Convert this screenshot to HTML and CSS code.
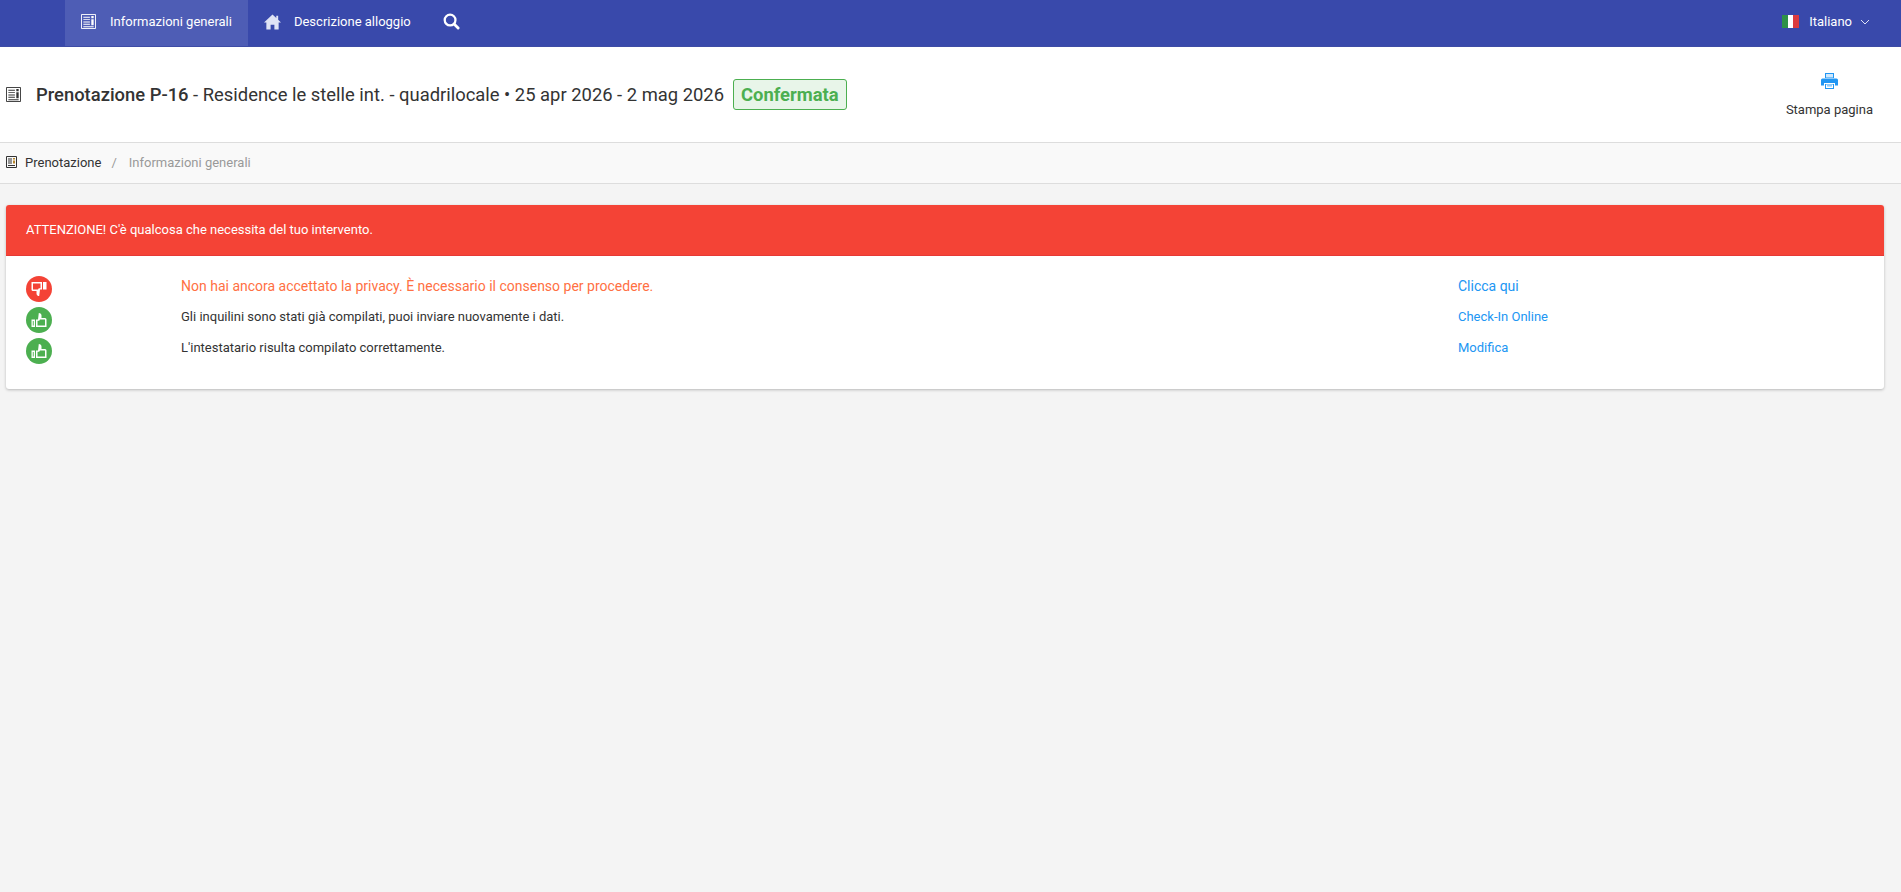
FILE: index.html
```html
<!DOCTYPE html>
<html lang="it">
<head>
  <meta charset="UTF-8">
  <meta name="viewport" content="width=device-width, initial-scale=1.0">
  <title>Prenotazione P-16</title>
  <link rel="stylesheet" href="styles.css">
</head>
<body>
  <!-- Barra di navigazione -->
  <nav class="topbar">
    <div class="topbar-menu">
      <a class="topbar-item active" href="#">
        <svg class="topbar-icon" viewBox="0 0 16 16"><path fill="none" stroke="#fff" d="M.5.5h15v15H.5z"/><path fill="#fff" d="M2.500 3h7v1h-7zM2.500 5.500h7v1h-7zM2.500 8h7v1h-7zM2.500 10.500h7v1h-7zM2.500 13h11v1h-11zM11 2h2.500v2.500H11zM11 5.500h2.500V12H11z"/></svg>
        <span>Informazioni generali</span>
      </a>
      <a class="topbar-item" href="#">
        <svg class="topbar-icon home" viewBox="0 0 18 16"><path fill="#dfe3f5" d="M9 0 0 8.500h2.500V16h4.500v-5h4v5h4.500V8.500H18l-3-2.900V1.500h-2v2.200z"/></svg>
        <span>Descrizione alloggio</span>
      </a>
      <a class="topbar-item search" href="#">
        <svg class="search-icon" viewBox="0 0 18 18"><circle cx="7.500" cy="7.500" r="5.700" fill="none" stroke="#fff" stroke-width="2.400"/><path stroke="#fff" stroke-width="3" stroke-linecap="round" d="m12 12 4 4"/></svg>
      </a>
    </div>
    <a class="lang" href="#">
      <span class="flag"><i class="flag-green"></i><i class="flag-white"></i><i class="flag-red"></i></span>
      <span>Italiano</span>
      <svg class="chevron" viewBox="0 0 10 6"><path fill="none" stroke="#dfe3f5" d="m1 1 4 4 4-4"/></svg>
    </a>
  </nav>

  <!-- Intestazione pagina -->
  <header class="page-head">
    <div class="page-title">
      <svg class="title-icon" viewBox="0 0 16 16"><path fill="none" stroke="#333" d="M.5.500h15v15H.5z"/><path fill="#333" d="M2.500 3h7v1h-7zM2.500 5.500h7v1h-7zM2.500 8h7v1h-7zM2.500 10.500h7v1h-7zM2.500 13h11v1h-11zM11 2h2.500v2.500H11zM11 5.500h2.500V12H11z"/></svg>
      <h1><strong>Prenotazione P-16</strong> - Residence le stelle int. - quadrilocale • 25 apr 2026 - 2 mag 2026</h1>
      <span class="status">Confermata</span>
    </div>
    <a class="print" href="#">
      <svg class="print-icon" viewBox="0 0 17 16"><path fill="#2196f3" d="M4 0h9v5H4zM1.500 5.500h14A1.500 1.500 0 0 1 17 7v5.500h-3V10H3v2.500H0V7a1.500 1.500 0 0 1 1.500-1.500z"/><path fill="#2196f3" d="M4 11h9v5H4z"/><path fill="#cfe8fc" d="M5 1h7v3.500H5z"/><path fill="#fff" d="M5 11.500h7v3.500H5z"/><path fill="#2196f3" d="M6 12.500h5v.8H6z"/></svg>
      <span>Stampa pagina</span>
    </a>
  </header>

  <!-- Breadcrumb -->
  <div class="breadcrumb">
    <svg class="crumb-icon" viewBox="0 0 11 12"><path fill="none" stroke="#333" d="M.5.500h10v11H.5z"/><path fill="#333" d="M2 2.500h4v1H2zM2 4.500h4v1H2zM2 6.500h4v1H2zM2 9h7v1H2z"/><path fill="#b8862b" d="M7 2h2v1.500H7zM7 4.500h2v3H7z"/></svg>
    <a href="#">Prenotazione</a>
    <span class="crumb-sep">/</span>
    <span class="crumb-current">Informazioni generali</span>
  </div>

  <main class="content">
    <section class="card">
      <div class="card-head">ATTENZIONE! C'è qualcosa che necessita del tuo intervento.</div>
      <div class="card-body">
        <div class="check-row warn">
          <span class="badge badge-red">
            <svg viewBox="0 0 16 16"><path fill="#fff" d="M.5 1h10.500v7.500H9l-.8 6.500c-1.700 0-2.700-1.100-2.700-2.600V10H2A1.500 1.500 0 0 1 .5 8.500zM12 1h3.500v7.500H12z"/><path fill="#f44336" d="M2 2.500h7.500v4.700H7.800l-.8 1.300H2z"/></svg>
          </span>
          <span class="check-text">Non hai ancora accettato la privacy. È necessario il consenso per procedere.</span>
          <a class="check-link" href="#">Clicca qui</a>
        </div>
        <div class="check-row">
          <span class="badge badge-green">
            <svg viewBox="0 0 16 16"><path fill="#fff" d="M15.500 15H5V7.500h2L7.800 1c1.700 0 2.700 1.100 2.700 2.600V6H14a1.500 1.500 0 0 1 1.500 1.500zM.5 7.500H4V15H.5z"/><path fill="#4caf50" d="M14 13.500H6.500V8.800h1.700l.8-1.300H14zM1.800 9h.9v4.500h-.9z"/></svg>
          </span>
          <span class="check-text">Gli inquilini sono stati già compilati, puoi inviare nuovamente i dati.</span>
          <a class="check-link" href="#">Check-In Online</a>
        </div>
        <div class="check-row">
          <span class="badge badge-green">
            <svg viewBox="0 0 16 16"><path fill="#fff" d="M15.500 15H5V7.500h2L7.800 1c1.700 0 2.700 1.100 2.700 2.600V6H14a1.500 1.500 0 0 1 1.500 1.500zM.5 7.500H4V15H.5z"/><path fill="#4caf50" d="M14 13.500H6.500V8.800h1.700l.8-1.300H14zM1.800 9h.9v4.500h-.9z"/></svg>
          </span>
          <span class="check-text">L'intestatario risulta compilato correttamente.</span>
          <a class="check-link" href="#">Modifica</a>
        </div>
      </div>
    </section>
  </main>
</body>
</html>
```

FILE: styles.css
```css
/* Stile generale */
html, body {
  height: 100%;
}

body {
  margin: 0;
  background-color: #f4f4f4;
  color: #333;
  font-family: Roboto, "Liberation Sans", sans-serif;
  font-size: 13px;
}

a {
  text-decoration: none;
}

/* Barra di navigazione */
.topbar {
  display: flex;
  justify-content: space-between;
  height: 46px;
  padding-left: 65px;
  padding-right: 31px;
  background-color: #3949ab;
  border-bottom: 1px solid #3e4ca5;
}

.topbar-menu {
  display: flex;
}

.topbar-item {
  display: flex;
  align-items: center;
  padding: 0 16px 3px;
  color: #fff;
}

.topbar-item.active {
  background-color: #4e5db5;
}

.topbar-icon {
  width: 15px;
  height: 15px;
  margin-right: 14px;
}

.topbar-icon.home {
  width: 17px;
  height: 16px;
  margin-right: 13px;
}

.search-icon {
  width: 17px;
  height: 17px;
}

.lang {
  display: flex;
  align-items: center;
  padding-bottom: 3px;
  color: #fff;
}

.flag {
  display: flex;
  width: 17px;
  height: 13px;
  margin-right: 10px;
}

.flag i {
  flex: 1;
}

.flag-green {
  background-color: #2e9148;
}

.flag-white {
  background-color: #fff;
}

.flag-red {
  background-color: #dc3b3f;
}

.chevron {
  width: 10px;
  height: 6px;
  margin-left: 8px;
}

/* Intestazione pagina */
.page-head {
  display: flex;
  justify-content: space-between;
  align-items: center;
  height: 95px;
  padding-left: 6px;
  padding-right: 14px;
  background-color: #fff;
  border-bottom: 1px solid #ddd;
}

.page-title {
  display: flex;
  align-items: center;
}

.title-icon {
  width: 15px;
  height: 15px;
  margin-right: 15px;
}

.page-title h1 {
  margin: 0;
  font-size: 18.4px;
  font-weight: 400;
}

.page-title strong {
  font-weight: 500;
}

.status {
  margin-left: 9px;
  padding: 3px 7px;
  background-color: #e8f5e9;
  border: 1px solid #4caf50;
  border-radius: 3px;
  color: #4caf50;
  font-size: 18.4px;
  font-weight: 700;
  line-height: 23px;
}

.print {
  display: flex;
  flex-direction: column;
  align-items: center;
  gap: 13px;
  margin-right: 14px;
  color: #333;
}

.print-icon {
  width: 17px;
  height: 16px;
}

/* Breadcrumb */
.breadcrumb {
  display: flex;
  align-items: center;
  height: 40px;
  padding-left: 6px;
  padding-bottom: 2px;
  box-sizing: border-box;
  background-color: #f9f9f9;
  border-bottom: 1px solid #ddd;
  height: 41px;
}

.breadcrumb a {
  color: #333;
}

.crumb-icon {
  width: 11px;
  height: 12px;
  margin-right: 8px;
}

.crumb-sep {
  margin: 0 12px 0 10px;
  color: #999;
}

.crumb-current {
  color: #999;
}

/* Scheda avvisi */
.content {
  padding: 21px 17px 0 6px;
}

.card {
  background-color: #fff;
  border-radius: 3px;
  box-shadow: 0 1px 3px rgba(0, 0, 0, 0.25);
}

.card-head {
  height: 50px;
  padding-left: 20px;
  background-color: #f44336;
  border-bottom: 1px solid #e53935;
  border-radius: 3px 3px 0 0;
  color: #fff;
  line-height: 50px;
}

.card-body {
  display: flex;
  flex-direction: column;
  gap: 5px;
  padding: 20px 20px 25px;
}

.check-row {
  display: grid;
  grid-template-columns: 155px 1277px 1fr;
  align-items: start;
  height: 26px;
  line-height: 20px;
}

.check-row.warn {
  font-size: 14px;
}

.check-row.warn .check-text {
  color: #ff7043;
}

.check-link {
  color: #2196f3;
}

.badge {
  display: flex;
  justify-content: center;
  align-items: center;
  width: 26px;
  height: 26px;
  border-radius: 50%;
}

.badge svg {
  width: 16px;
  height: 16px;
}

.badge-red {
  background-color: #f44336;
}

.badge-green {
  background-color: #4caf50;
}
```
